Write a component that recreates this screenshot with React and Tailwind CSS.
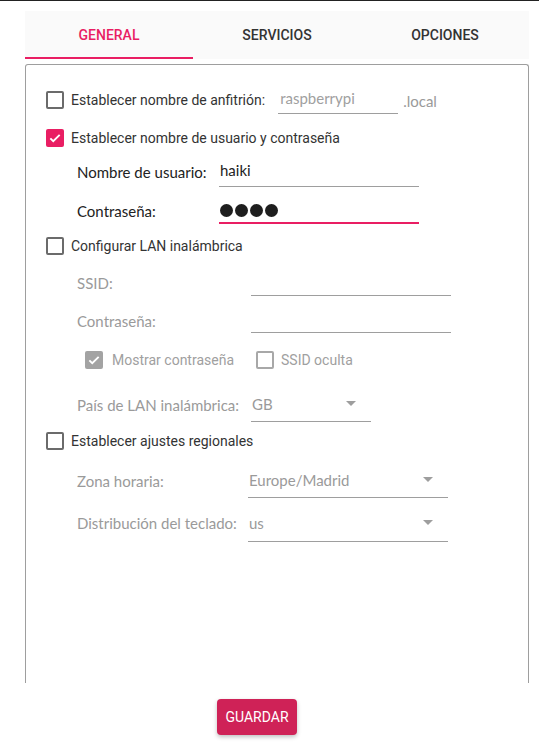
import React from 'react';

const ubuntu = { fontFamily: 'Lato, "Noto Sans", sans-serif' };

const Check = ({ state = 'off', muted = false }) => {
  if (state === 'on') {
    return (
      <span className={`flex h-[18px] w-[18px] shrink-0 items-center justify-center rounded-[2px] ${muted ? 'bg-[#a3a3a3]' : 'bg-[#e91e63]'}`}>
        <svg width="14" height="14" viewBox="0 0 24 24">
          <path d="M4 12.5l5 5 11-11" fill="none" stroke="#fff" strokeWidth="3.2" />
        </svg>
      </span>
    );
  }
  return (
    <span className={`block h-[18px] w-[18px] shrink-0 rounded-[2px] border-2 ${muted ? 'border-[#a8a8a8]' : 'border-[#6b6b6b]'}`} />
  );
};

const CheckRow = ({ label, state, className = '' }) => (
  <div className={`flex h-[38px] items-center pl-[20px] ${className}`}>
    <Check state={state} />
    <span className="ml-[7px] text-[14px] text-[#333]">{label}</span>
  </div>
);

const Arrow = () => (
  <span className="block h-0 w-0 border-x-[5px] border-t-[5px] border-x-transparent border-t-[#9e9e9e]" />
);

// label + underlined field, aligned to the bottom of the row
const FieldRow = ({ label, labelW, value, inputW, h, labelMb, valuePb, disabled, select }) => (
  <div className="flex items-end pl-[51px]" style={{ height: h }}>
    <span
      className={`shrink-0 text-[15px] leading-[20px] ${disabled ? 'text-[#9a9a9a]' : 'text-[#222]'}`}
      style={{ ...ubuntu, width: labelW, marginBottom: labelMb }}
    >
      {label}
    </span>
    <div
      className="flex h-full items-end justify-between border-b border-[#9e9e9e]"
      style={{ width: inputW, paddingBottom: valuePb }}
    >
      <span
        className={`pl-[1px] text-[15px] leading-[20px] ${disabled ? 'text-[#9a9a9a]' : 'text-[#222]'}`}
        style={ubuntu}
      >
        {value}
      </span>
      {select && (
        <span className="mb-[8px] mr-[15px]">
          <Arrow />
        </span>
      )}
    </div>
  </div>
);

const Dots = () => (
  <span className="flex gap-[2px]">
    {[0, 1, 2, 3].map((i) => (
      <span key={i} className="block h-[13px] w-[13px] rounded-full bg-[#1e1e1e]" />
    ))}
  </span>
);

export default function App() {
  const tabs = ['GENERAL', 'SERVICIOS', 'OPCIONES'];

  return (
    <div className="h-[751px] w-[539px] overflow-hidden border-t border-[#222] bg-white" style={{ fontFamily: 'Roboto, "Liberation Sans", sans-serif' }}>
      {/* tabs */}
      <div className="ml-[25px] mt-[10px] flex h-[48px] w-[504px] bg-[#fafafa]">
        {tabs.map((t, i) => (
          <div
            key={t}
            className={`flex flex-1 items-center justify-center text-[14px] font-medium ${
              i === 0 ? 'border-b-2 border-[#e91e63] pt-[2px] text-[#e91e63]' : 'text-[#333]'
            }`}
          >
            {t}
          </div>
        ))}
      </div>

      {/* panel */}
      <div className="ml-[25px] mt-[5px] h-[619px] w-[504px] rounded-t-[3px] border border-b-0 border-[#9e9e9e] pt-[16px]">
        {/* hostname */}
        <div className="flex h-[38px] items-center pl-[20px]">
          <Check />
          <span className="ml-[7px] text-[14px] text-[#333]">Establecer nombre de anfitrión:</span>
          <div className="ml-[13px] h-[28px] w-[120px] border-b border-[#9e9e9e] pl-[2px] pt-[1px]">
            <span className="text-[15px] leading-[20px] text-[#a0a0a0]" style={ubuntu}>raspberrypi</span>
          </div>
          <span className="ml-[5px] mt-[2px] text-[15px] text-[#9a9a9a]" style={ubuntu}>.local</span>
        </div>

        <CheckRow label="Establecer nombre de usuario y contraseña" state="on" />

        <FieldRow label="Nombre de usuario:" labelW={142} value="haiki" inputW={200} h={30} labelMb={5} valuePb={6} />
        <div className="flex h-[37px] items-end pl-[51px]">
          <span className="w-[142px] shrink-0 text-[15px] leading-[20px] text-[#222]" style={{ ...ubuntu, marginBottom: 3 }}>
            Contraseña:
          </span>
          <div className="flex h-full w-[200px] items-end border-b-2 border-[#e91e63] pb-[5px] pl-[1px]">
            <Dots />
          </div>
        </div>

        <CheckRow label="Configurar LAN inalámbrica" className="mt-[3px]" />

        <FieldRow label="SSID:" labelW={174} value="" inputW={200} h={31} labelMb={3} valuePb={0} disabled />
        <FieldRow label="Contraseña:" labelW={174} value="" inputW={200} h={37} labelMb={2} valuePb={0} disabled />

        <div className="mt-[8px] flex h-[38px] items-center pl-[59px]">
          <Check state="on" muted />
          <span className="ml-[9px] text-[14px] text-[#a0a0a0]">Mostrar contraseña</span>
          <span className="ml-[22px]">
            <Check muted />
          </span>
          <span className="ml-[7px] text-[14px] text-[#a0a0a0]">SSID oculta</span>
        </div>

        <FieldRow label="País de LAN inalámbrica:" labelW={174} value="GB" inputW={120} h={43} labelMb={7} valuePb={7} disabled select />

        <CheckRow label="Establecer ajustes regionales" />

        <FieldRow label="Zona horaria:" labelW={171} value="Europe/Madrid" inputW={200} h={38} labelMb={7} valuePb={7} disabled select />
        <FieldRow label="Distribución del teclado:" labelW={171} value="us" inputW={200} h={44} labelMb={9} valuePb={8} disabled select />
      </div>

      <div className="mt-[16px] pl-[217px]">
        <button className="h-[36px] w-[80px] rounded-[4px] bg-[#cf2257] text-[14px] text-white shadow-[0_2px_4px_rgba(0,0,0,0.25)]">
          GUARDAR
        </button>
      </div>
    </div>
  );
}
